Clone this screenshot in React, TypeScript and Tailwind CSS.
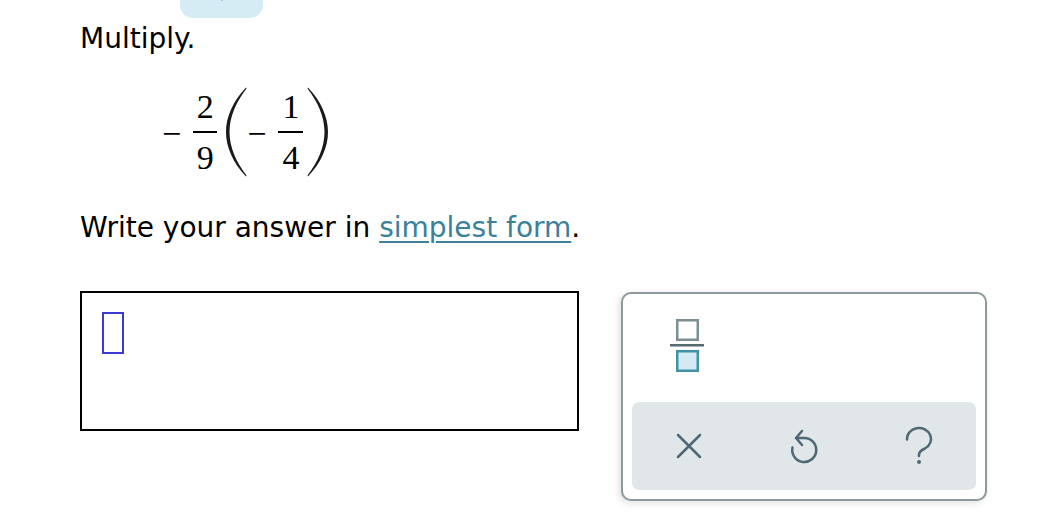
import React from 'react';

// Верхняя вкладка (кусок кнопки, срезанный краем окна)
const TopTab: React.FC = () => (
    <div className="relative ml-[180px] h-[18px] w-[83px] overflow-hidden rounded-b-[13px] bg-[#d5ecf5]">
        <svg className="absolute left-[34px] top-[-12px]" width="16" height="16" viewBox="0 0 16 16">
            <path d="M3 6 L8 11 L13 6" fill="none" stroke="#2d6d9c" strokeWidth="2.5" strokeLinecap="round" />
        </svg>
    </div>
);

// Дробь в стиле MathJax
const Frac: React.FC<{ num: string; den: string; w: number }> = ({ num, den, w }) => (
    <div className="mt-[3px] flex flex-col items-center">
        <span className="mb-[7px] text-[34px] leading-[34px]">{num}</span>
        <div className="h-[2px] bg-black" style={{ width: w }} />
        <span className="mt-[8px] text-[34px] leading-[34px]">{den}</span>
    </div>
);

const Minus: React.FC<{ className?: string }> = ({ className = '' }) => (
    <span className={`mt-[30px] text-[34px] leading-[34px] ${className}`}>−</span>
);

// Растянутые скобки
const Paren: React.FC<{ right?: boolean }> = ({ right }) => (
    <svg width="22" height="90" viewBox="0 0 22 90" className="shrink-0">
        <path
            d={
                right
                    ? 'M1 0.5 C14 14 21 30 21 45 C21 60 14 76 1 89.5 L0.5 88.5 C11 75 17.5 60 17.5 45 C17.5 30 11 15 0.5 1.5 Z'
                    : 'M21 0.5 C8 14 1 30 1 45 C1 60 8 76 21 89.5 L21.5 88.5 C11 75 4.5 60 4.5 45 C4.5 30 11 15 21.5 1.5 Z'
            }
            fill="#1a1a1a"
        />
    </svg>
);

// Панель инструментов справа от поля ввода
const ToolPanel: React.FC = () => (
    <div className="ml-[42px] mt-[1px] flex h-[209px] w-[366px] flex-col rounded-[10px] border-2 border-[#8d999d] bg-white p-[9px] shadow-[-2px_2px_7px_rgba(0,0,0,0.13)]">
        {/* кнопка дроби */}
        <svg className="ml-[38px] mt-[16px]" width="34" height="54" viewBox="0 0 34 54">
            <rect x="7.25" y="1.25" width="20.5" height="19.5" fill="#fff" stroke="#7b8f95" strokeWidth="2.5" />
            <rect x="0" y="25" width="34" height="2.5" fill="#566a70" />
            <rect x="7.25" y="32.25" width="20.5" height="19.5" fill="#d3eaf4" stroke="#3f93a5" strokeWidth="2.5" />
        </svg>

        <div className="mt-auto grid h-[88px] grid-cols-3 items-center rounded-[7px] bg-[#e1e6e8]">
            {/* очистить */}
            <div className="flex justify-center">
                <svg width="26" height="26" viewBox="0 0 26 26">
                    <path d="M2 2 L24 24 M24 2 L2 24" stroke="#4e6876" strokeWidth="2.5" strokeLinecap="round" />
                </svg>
            </div>
            {/* отменить */}
            <div className="flex justify-center">
                <svg width="28" height="36" viewBox="0 0 28 36">
                    <path
                        d="M12 3 L6 10 L12 17 M6 10 H14 A12 12 0 1 1 2.5 19.5"
                        fill="none"
                        stroke="#4e6876"
                        strokeWidth="2.5"
                        strokeLinecap="round"
                        strokeLinejoin="round"
                    />
                </svg>
            </div>
            {/* справка */}
            <div className="flex justify-center">
                <svg width="30" height="40" viewBox="0 0 30 40">
                    <path
                        d="M3 13.5 A12 11 0 1 1 21 22.5 Q15 25 15 29 V30"
                        fill="none"
                        stroke="#4e6876"
                        strokeWidth="2.5"
                        strokeLinecap="round"
                    />
                    <circle cx="15" cy="36" r="2" fill="#4e6876" />
                </svg>
            </div>
        </div>
    </div>
);

export default function App() {
    return (
        <div className="h-[525px] w-[1052px] overflow-hidden bg-white font-['DejaVu_Sans',Verdana,sans-serif] text-black">
            <TopTab />

            <div className="pl-[80px]">
                <p className="mt-[5px] text-[28px] leading-[32px]">Multiply.</p>

                {/* Выражение */}
                <div className="ml-[82px] mt-[32px] flex h-[90px] items-start font-['Liberation_Serif',serif]">
                    <Minus />
                    <div className="ml-[12px]">
                        <Frac num="2" den="9" w={24} />
                    </div>
                    <div className="ml-[8px]">
                        <Paren />
                    </div>
                    <Minus />
                    <div className="ml-[12px]">
                        <Frac num="1" den="4" w={25} />
                    </div>
                    <div className="ml-[4px]">
                        <Paren right />
                    </div>
                </div>

                <p className="mt-[35px] text-[28px] leading-[32px]">
                    Write your answer in{' '}
                    <a href="#" className="text-[#3a8199] underline decoration-[1.5px] underline-offset-[4px]">
                        simplest form
                    </a>
                    .
                </p>

                <div className="mt-[47px] flex items-start">
                    {/* поле ответа */}
                    <div className="h-[140px] w-[499px] border-2 border-black bg-white">
                        <div className="ml-[20px] mt-[19px] h-[42px] w-[22px] border-2 border-[#3b3bd1]" />
                    </div>
                    <ToolPanel />
                </div>
            </div>
        </div>
    );
}
